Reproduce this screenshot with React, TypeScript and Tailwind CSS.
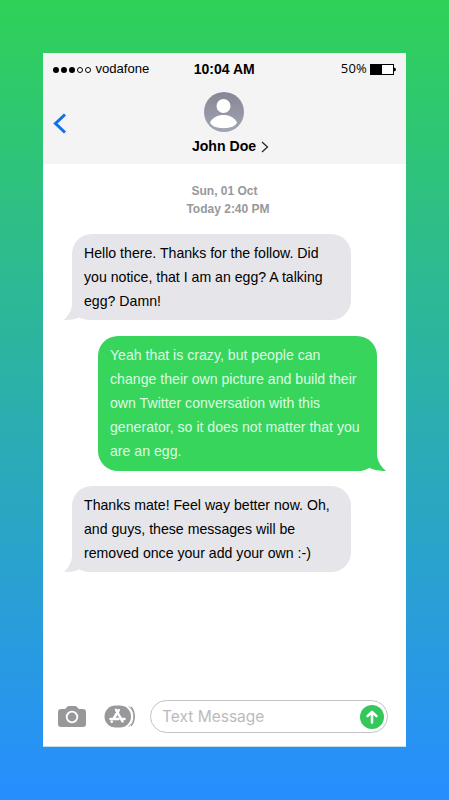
interface Message {
  id: number;
  text: string;
  mine: boolean;
}

const messages: Message[] = [
  {
    id: 1,
    text: "Hello there. Thanks for the follow. Did you notice, that I am an egg? A talking egg? Damn!",
    mine: false,
  },
  {
    id: 2,
    text: "Yeah that is crazy, but people can change their own picture and build their own Twitter conversation with this generator, so it does not matter that you are an egg.",
    mine: true,
  },
  {
    id: 3,
    text: "Thanks mate! Feel way better now. Oh, and guys, these messages will be removed once your add your own :-)",
    mine: false,
  },
];

const signal = [true, true, true, false, false];

function StatusBar() {
  return (
    <div className="grid h-8 grid-cols-3 items-center pl-[9.5px] pr-[10px] text-[13.1px]">
      <div className="flex items-center">
        <div className="mr-1 mt-[2px] flex gap-[1.6px]">
          {signal.map((on, i) => (
            <span
              key={i}
              className={
                on
                  ? "size-[6.5px] rounded-full bg-black"
                  : "size-[6.5px] rounded-full border border-black bg-white"
              }
            />
          ))}
        </div>
        <span>vodafone</span>
      </div>
      <div className="text-center text-[14px] font-bold whitespace-nowrap">10:04 AM</div>
      <div className="flex items-center justify-end">
        <span className="mr-[3px] font-['Open_Sans',sans-serif] text-[13px] tracking-[0.2px]">50%</span>
        <svg width="26" height="11" viewBox="0 0 26 11">
          <rect x="0.5" y="0.5" width="23" height="10" fill="#fff" stroke="#000" />
          <rect x="0" y="0" width="12" height="11" />
          <path d="M24 3.5Q26 4 26 5.5Q26 7 24 7.5Z" />
        </svg>
      </div>
    </div>
  );
}

function Header() {
  return (
    <header className="h-[111px] bg-[#f4f4f4]">
      <StatusBar />
      <div className="grid grid-cols-[1fr_auto_1fr]">
        <svg className="ml-[10px] mt-[28px]" width="14" height="21" viewBox="0 0 14 21" fill="none">
          <path d="M12 1.5L2.5 10.5L12 19.5" stroke="#0c6ff0" strokeWidth="3" />
        </svg>
        <div className="flex flex-col items-center pt-[7px]">
          <svg className="mr-px" width="40" height="40" viewBox="0 0 40 40">
            <defs>
              <linearGradient id="avatar" x1="0" y1="0" x2="0" y2="1">
                <stop offset="0" stopColor="#858793" />
                <stop offset="1" stopColor="#a2a6b2" />
              </linearGradient>
            </defs>
            <circle cx="20" cy="20" r="20" fill="url(#avatar)" />
            <circle cx="19.5" cy="14" r="7" fill="#fff" />
            <path
              d="M6 30.5C8.5 25.5 13.5 23 19.5 23C25.5 23 30.5 25.5 33 30.5C32 34 26.5 36.2 19.5 36.2C12.5 36.2 7 34 6 30.5Z"
              fill="#fff"
            />
          </svg>
          <div className="ml-3 mt-[3px] flex items-center text-[14.1px] font-bold leading-[22px]">
            John Doe
            <svg className="ml-[5px] mt-px" width="8" height="12" viewBox="0 0 8 12" fill="none">
              <path d="M1 1L6.5 6L1 11" stroke="#222" strokeWidth="1.2" />
            </svg>
          </div>
        </div>
      </div>
    </header>
  );
}

function Bubble({ message }: { message: Message }) {
  return (
    <div
      className={
        message.mine
          ? "relative w-[279px] self-end rounded-[20px] bg-[#38d55c] px-3 py-[7px] text-[#dcfbe2]"
          : "relative w-[279px] rounded-[20px] bg-[#e5e5ea] px-3 py-[7px] text-black"
      }
    >
      {/* bubble tail */}
      {message.mine ? (
        <svg className="absolute -right-[9px] bottom-0" width="27" height="19" viewBox="0 0 27 19">
          <path
            d="M0 0H18V4C19 10 22 15 27 19C21 19 14 18 10.5 15.8C8 17.800 4 19 0 19Z"
            fill="#38d55c"
          />
        </svg>
      ) : (
        <svg className="absolute -left-[8px] bottom-0" width="27" height="19" viewBox="0 0 27 19">
          <path d="M27 0H8V4C7.5 9 5 14 0 19C6 19 12 18.500 15.500 16.300C18 18 22 19 27 19Z" fill="#e5e5ea" />
        </svg>
      )}
      <p className="relative">{message.text}</p>
    </div>
  );
}

function InputBar() {
  return (
    <footer className="flex items-center pb-[13px] pl-[15px] pr-[18px]">
      <svg width="28" height="21" viewBox="0 0 28 21">
        <path
          d="M3 3H7L9 1Q9.8 0 11 0H17Q18.2 0 19 1L21 3H25Q28 3 28 6V18Q28 21 25 21H3Q0 21 0 18V6Q0 3 3 3Z"
          fill="#98989b"
        />
        <circle cx="14" cy="11" r="5.3" fill="none" stroke="#fff" strokeWidth="1.8" />
      </svg>
      <svg className="ml-[18px]" width="32" height="23" viewBox="0 0 32 23" fill="none">
        <rect x="0.5" y="0.5" width="26.5" height="22" rx="11" fill="#98989b" />
        <path d="M24.500 1.500C31.500 5 31.500 18 24.500 21.500" stroke="#98989b" strokeWidth="0.8" />
        <path d="M27 2C31.500 7 31.500 16 27 21" stroke="#98989b" strokeWidth="1.2" />
        <g stroke="#fff" strokeWidth="2.5" strokeLinecap="round">
          <path d="M12 4.800L18.500 16.500" />
          <path d="M14.800 5L9.800 13.500" />
          <path d="M6.500 14H14.500M18 14H20.500" />
          <path d="M7.800 16.500L7.600 16.800" />
        </g>
      </svg>
      <div className="ml-[14px] flex h-[33px] flex-1 items-center justify-between rounded-full border border-[#c3c3c6] pl-[11px] pr-[3px]">
        <span className="font-[Inter,sans-serif] text-[15.5px] text-[#bbbbbe]">Text Message</span>
        <svg width="24" height="24" viewBox="0 0 24 24" fill="none">
          <circle cx="12" cy="12" r="12" fill="#34c759" />
          <path
            d="M12 17.5V7M7.5 11.2L12 6.8L16.5 11.2"
            stroke="#fff"
            strokeWidth="2.5"
            strokeLinecap="round"
            strokeLinejoin="round"
          />
        </svg>
      </div>
    </footer>
  );
}

export default function App() {
  return (
    <div className="flex h-[800px] flex-col items-center bg-linear-to-b/srgb from-[#30d158] to-[#278eff] pt-[53px] font-['Liberation_Sans',Arial,sans-serif]">
      <div className="flex h-[694px] w-[363px] flex-col bg-white">
        <Header />
        <div className="mt-[18px] text-center text-xs font-bold leading-[18px] text-[#98989c]">
          <div>Sun, 01 Oct</div>
          <div className="pl-[7px]">Today 2:40 PM</div>
        </div>
        <main className="mt-[15.8px] flex flex-1 flex-col gap-[15.2px] pl-[29px] pr-[29px] text-[14.13px] leading-[24.2px]">
          {messages.map((message) => (
            <Bubble key={message.id} message={message} />
          ))}
        </main>
        <InputBar />
        <div className="h-px bg-[#c3dfe8]" />
      </div>
    </div>
  );
}
